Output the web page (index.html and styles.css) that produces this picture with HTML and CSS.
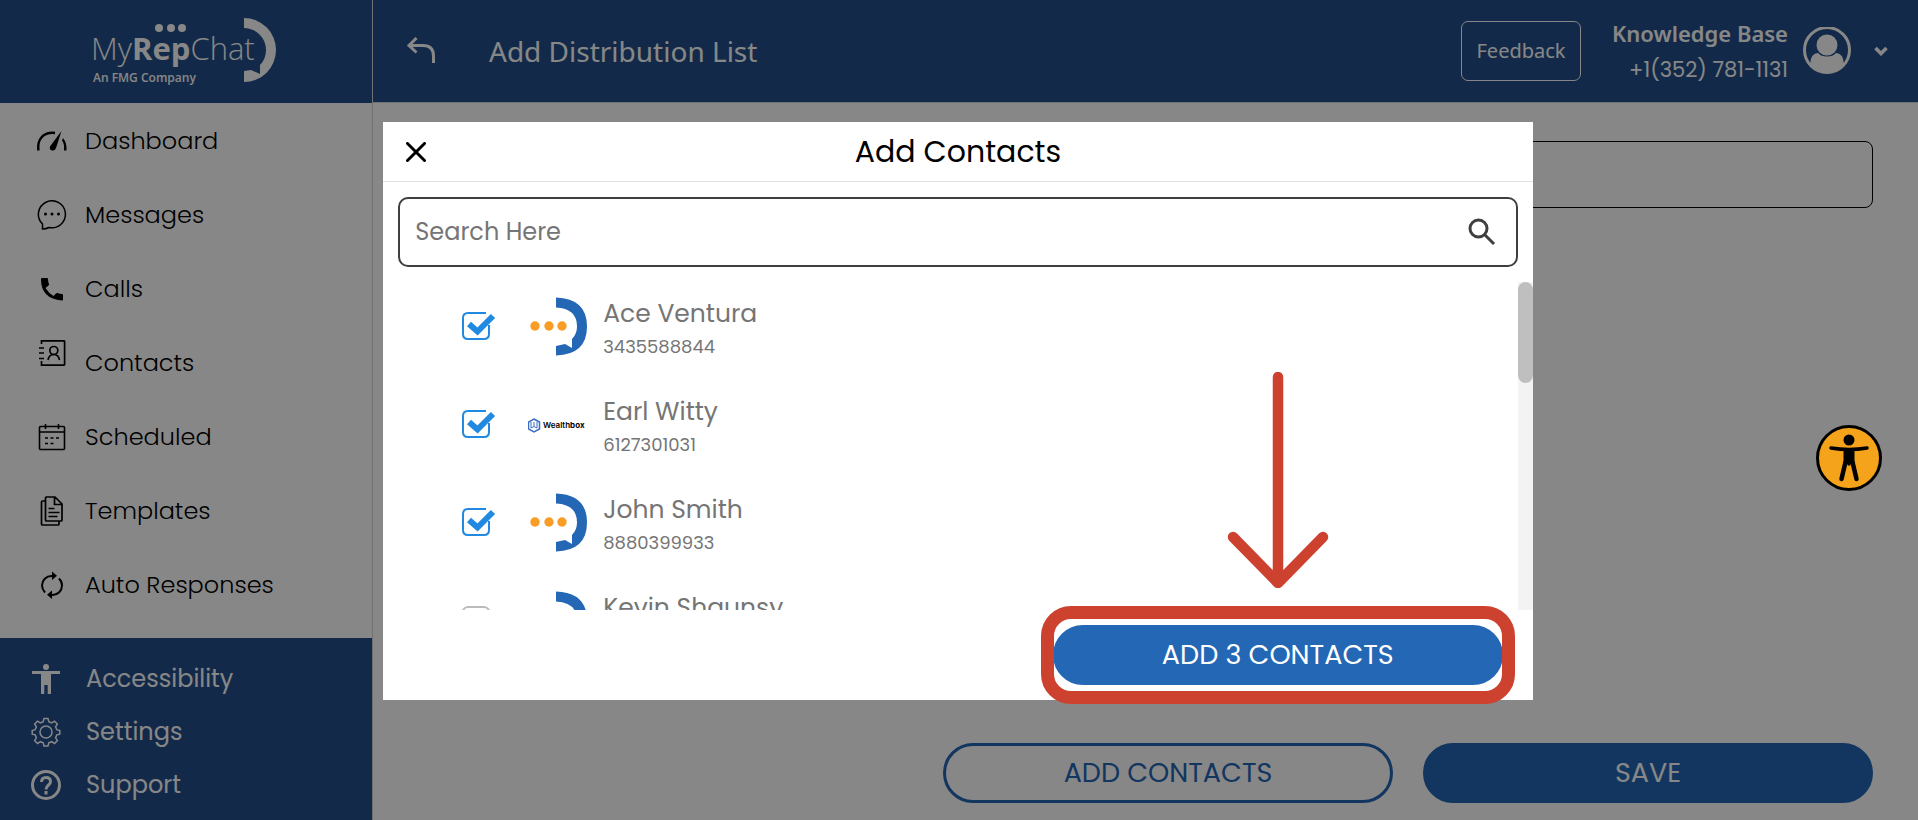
FILE: index.html
```html
<!DOCTYPE html>
<html lang="en">
<head>
	<meta charset="UTF-8">
	<title>Add Distribution List</title>
	<link rel="stylesheet" href="styles.css">
</head>
<body>
	<svg class="defs" width="0" height="0">
		<symbol id="chat-logo" viewBox="0 0 60 60">
			<path d="M28 .5q31 1 31 29T28 58.500V49l9-2 7 4v-9q5-5 5-12.500 0-18-21-19z" fill="#2467b5"/>
			<g fill="#f99d26"><circle cx="7" cy="29" r="4.700"/><circle cx="21" cy="29" r="4.700"/><circle cx="34" cy="29" r="4.700"/></g>
		</symbol>
	</svg>

	<div class="page">
		<div class="sidebar">
			<div class="logo">
				<svg width="190" height="70" viewBox="0 0 190 70" fill="#fff">
					<circle cx="68" cy="11" r="4"/><circle cx="80" cy="11" r="4"/><circle cx="91" cy="11" r="4"/>
					<path d="M153 1a32 32 0 0 1 0 64V54l7-1 9 4v-9q6-6 6-15a22 22 0 0 0-22-22z"/>
					<text class="logo-name" x="0" y="43">My<tspan class="bold">Rep</tspan>Chat</text>
					<text class="logo-sub" x="2" y="65">An FMG Company</text>
				</svg>
			</div>
			<ul class="menu">
				<li><a href="#">
					<svg width="30" height="30" viewBox="0 0 30 30"><path d="M1.500 24.500Q0 14 7 9q5-3 11-2" fill="none" stroke="#000" stroke-width="2.400"/><path d="M24.500 5 19 22q-1 3-4 2.500-3-1-2-4zM26 12q4 5 3.500 12.500h-2.500q.5-7-2-10z"/></svg>
					Dashboard</a></li>
				<li><a href="#">
					<svg width="30" height="30" viewBox="0 0 30 30"><path d="M5.500 29V24A13.500 13.500 0 1 1 12 27.500Q9 29 5.500 29z" fill="none" stroke="#000" stroke-width="1.500"/><circle cx="8.500" cy="14" r="1.500"/><circle cx="15" cy="14" r="1.500"/><circle cx="21.500" cy="14" r="1.500"/></svg>
					Messages</a></li>
				<li><a href="#">
					<svg width="30" height="30" viewBox="0 0 30 30"><path d="M4 5q0-1 1-1h5q1 0 1 1 0 3 1 5 0 1-.5 1.500L8.500 14q3 5 8 8l2.500-2.500q.6-.6 1.500-.4 2.500.9 4.500.9 1 0 1 1v4.500q0 1-1 1Q4 25 4 5z"/></svg>
					Calls</a></li>
				<li class="raised"><a href="#">
					<svg width="30" height="30" viewBox="0 0 30 30" fill="none" stroke="#000" stroke-width="1.700"><path d="M4.500 6V2.800H27q.6 0 .6.600V26.500q0 .6-.6.600H4.500V23M2 10h5M2 15h5M2 20.500h5M11 22q1-5.500 5.800-5.500T22.500 22"/><circle cx="16.800" cy="12.500" r="4"/></svg>
					Contacts</a></li>
				<li><a href="#">
					<svg width="30" height="30" viewBox="0 0 30 30" fill="none" stroke="#000" stroke-width="1.600"><rect x="2.500" y="4.500" width="25" height="23" rx="1"/><path d="M2.500 10h25M8.500 2v5M21.500 2v5"/><path d="M8 16h14M8 21.500h9" stroke-dasharray="3 2.500"/></svg>
					Scheduled</a></li>
				<li><a href="#">
					<svg width="30" height="30" viewBox="0 0 30 30" fill="none" stroke="#000" stroke-width="1.700"><path d="M9 1h9l7 7v16q0 1-1 1H9.500q-1 0-1-1V2q0-1 1-1zM17.500 1v7.500H25M8 5H5.500q-1 0-1 1v22q0 1 1 1H21q1 0 1-1v-2.500M11.500 12.500h6M11.500 16.500h11M11.500 20.500h9"/></svg>
					Templates</a></li>
				<li><a href="#">
					<svg width="30" height="30" viewBox="0 0 30 30"><path d="M8 22.500Q5 19 5 15.500A9.500 9.500 0 0 1 14.500 6H16M22 8.500q3 3 3 7A9.500 9.500 0 0 1 15.500 25H14" fill="none" stroke="#000" stroke-width="2"/><path d="M15 1.500v8.500l5-4.300zM15 29v-8.500l-5 4.300z"/></svg>
					Auto Responses</a></li>
			</ul>
			<ul class="submenu">
				<li><a href="#">
					<svg width="30" height="30" viewBox="0 0 30 30" fill="#fff"><circle cx="15" cy="3" r="3"/><path d="M1 7h28v3H20v20h-3.300v-9h-3.400v9H10V10H1z"/></svg>
					Accessibility</a></li>
				<li><a href="#">
					<svg width="30" height="30" viewBox="0 0 30 30" fill="none" stroke="#fff" stroke-width="1.500"><circle cx="15" cy="15" r="6"/><path d="M13 1.500h4l.8 3.200 2.800 1.200 2.900-1.800 2.900 2.900-1.800 2.900 1.200 2.800 3 .8v3.600l-3 .8-1.200 2.800 1.800 2.900-2.900 2.900-2.900-1.800-2.800 1.200-.8 3.100h-4l-.8-3.100-2.800-1.200-2.900 1.800-2.900-2.900 1.800-2.900-1.200-2.800-3-.8v-3.600l3-.8 1.200-2.800-1.800-2.900 2.900-2.900 2.900 1.800 2.800-1.200z"/></svg>
					Settings</a></li>
				<li><a href="#">
					<svg width="30" height="30" viewBox="0 0 30 30" fill="none" stroke="#fff" stroke-width="3"><circle cx="15" cy="15" r="13.500"/><path d="M10.500 12q0-4.500 4.500-4.500t4.500 4q0 2-2.200 3.700T15 19.500M15 21v3.500"/></svg>
					Support</a></li>
			</ul>
		</div>

		<div class="main">
			<div class="header">
				<button class="back" type="button" aria-label="Back">
					<svg width="30" height="28" viewBox="0 0 30 28" fill="none" stroke="#fff" stroke-width="3"><path d="M10.500 1 3 8.500l7.500 7M3.500 8.500H17q10.500 0 10.500 10.500v7"/></svg>
				</button>
				<h1>Add Distribution List</h1>
				<button class="feedback" type="button">Feedback</button>
				<div class="user">
					<strong>Knowledge Base</strong>
					<span>+1(352) 781-1131</span>
				</div>
				<svg class="avatar" width="48" height="48" viewBox="0 0 48 48"><circle cx="24" cy="23" r="22.500" fill="none" stroke="#fff" stroke-width="3"/><circle cx="24" cy="18" r="10.500" fill="#fff"/><path d="M7 37q1-11 8-11 3 3.500 9 3.500t9-3.500q7 0 8 11-7 9.500-17 9.500T7 37z" fill="#fff"/></svg>
				<svg width="14" height="10" viewBox="0 0 14 10"><path d="m1.500 2 5.500 5.500L12.500 2" fill="none" stroke="#fff" stroke-width="3.600"/></svg>
			</div>
			<div class="content">
				<input class="list-name" type="text" aria-label="List name">
				<div class="actions">
					<button class="btn outline" type="button">ADD CONTACTS</button>
					<button class="btn" type="button">SAVE</button>
				</div>
			</div>
		</div>
	</div>

	<div class="overlay">
		<div class="modal">
			<div class="modal-head">
				<button class="close" type="button" aria-label="Close">
					<svg width="20" height="20" viewBox="0 0 20 20"><path d="m1.500 1.500 17 17M18.500 1.500l-17 17" stroke="#000" stroke-width="3" stroke-linecap="round"/></svg>
				</button>
				<h2>Add Contacts</h2>
			</div>
			<div class="search">
				<input type="text" placeholder="Search Here" aria-label="Search Here">
				<svg width="28" height="28" viewBox="0 0 28 28" fill="none" stroke="#3f3f3f" stroke-width="3"><circle cx="10.500" cy="10.500" r="8.500"/><path d="m16.500 16.500 9.500 9.500"/></svg>
			</div>
			<div class="list-wrap">
				<ul class="contacts">
					<li>
						<input type="checkbox" id="c1" checked>
						<svg width="60" height="60"><use href="#chat-logo"/></svg>
						<label for="c1"><b>Ace Ventura</b><span>3435588844</span></label>
					</li>
					<li>
						<input type="checkbox" id="c2" checked>
						<svg width="60" height="60" viewBox="0 0 60 60"><path d="m6 24 5.500 3v7L6 37l-5.500-3v-7z" fill="none" stroke="#3a6cc0" stroke-width="1.500"/><path d="M3 27v6l3-1.500L9 33v-6M6 27v4" fill="none" stroke="#3a6cc0"/><text class="wealth" x="15" y="33">Wealth<tspan class="bold">box</tspan></text></svg>
						<label for="c2"><b>Earl Witty</b><span>6127301031</span></label>
					</li>
					<li>
						<input type="checkbox" id="c3" checked>
						<svg width="60" height="60"><use href="#chat-logo"/></svg>
						<label for="c3"><b>John Smith</b><span>8880399933</span></label>
					</li>
					<li>
						<input type="checkbox" id="c4">
						<svg width="60" height="60"><use href="#chat-logo"/></svg>
						<label for="c4"><b>Kevin Shaunsy</b></label>
					</li>
				</ul>
				<div class="track"><div class="thumb"></div></div>
			</div>
			<div class="modal-foot">
				<div class="target">
					<button class="btn" type="button">ADD 3 CONTACTS</button>
					<div class="ring"></div>
					<svg class="arrow" width="102" height="216" viewBox="0 0 102 216"><path d="M51 5v205M6 165l45 46 45-46" fill="none" stroke="#cd412f" stroke-width="10.500" stroke-linecap="round" stroke-linejoin="round"/></svg>
				</div>
			</div>
		</div>
	</div>

	<button class="widget" type="button" aria-label="Accessibility options">
		<svg width="66" height="66" viewBox="0 0 66 66"><circle cx="33" cy="33" r="31.500" fill="#f6a31c" stroke="#000" stroke-width="3"/><circle cx="33" cy="15" r="5.500"/><path d="M15 23q18 3 36 0M33 25v14" fill="none" stroke="#000" stroke-width="3.500" stroke-linecap="round"/><path d="M27.500 24h11v15H27.500z"/><path d="m29.500 37-4 17M36.500 37l4 17" stroke="#000" stroke-width="4.500" stroke-linecap="round"/></svg>
	</button>
</body>
</html>
```
FILE: styles.css
```css
/*css reset*/
html,body,ul,li,h1,h2{
	padding: 0;
	margin: 0;
}
*{box-sizing: border-box;}
body{
	background: #fff;
	font: 400 24px/36px Poppins, Inter, sans-serif;
	color: #000;
}
ul{list-style-type: none;}
a{
	color: inherit;
	text-decoration: none;
}
button,input{
	font: inherit;
	cursor: pointer;
}
button{
	padding: 0;
	border: 0;
	background: none;
}
svg{
	display: block;
	flex: none;
}
.defs{position: absolute;}
.bold{font-weight: 700;}

/*layout*/
.page{
	display: flex;
	height: 100vh;
}
.sidebar{
	width: 373px;
	flex: none;
	display: flex;
	flex-direction: column;
	border-right: 1px solid #d5d5d5;
}
.main{
	flex: 1;
	display: flex;
	flex-direction: column;
}

/*sidebar*/
.logo{
	height: 103px;
	display: flex;
	align-items: center;
	justify-content: center;
	background: #224f8a;
}
.logo-name{font: 300 31px "Open Sans", sans-serif;}
.logo-name .bold{font-weight: 700;}
.logo-sub{font: 600 12px "Open Sans", sans-serif;}
.menu{
	flex: 1;
	padding-top: 1px;
	font-weight: 300;
}
.menu a{
	height: 74px;
	display: flex;
	align-items: center;
	gap: 18px;
	padding-left: 37px;
}
.menu .raised svg{margin-bottom: 20px;}
.submenu{
	background: #224f8a;
	color: #fff;
	padding: 14px 0 9px;
}
.submenu a{
	height: 53px;
	display: flex;
	align-items: center;
	gap: 25px;
	padding-left: 31px;
}

/*header*/
.header{
	height: 103px;
	display: flex;
	align-items: center;
	background: #224f8a;
	border-bottom: 1px solid #d5d5d5;
	color: #fff;
	padding-right: 30px;
	font-family: "Segoe UI", "Noto Sans", sans-serif;
}
.back{margin: 0 53px 0 33px;}
.header h1{
	flex: 1;
	font-size: 28px;
	font-weight: 400;
}
.feedback{
	width: 120px;
	height: 60px;
	border: 1px solid #fff;
	border-radius: 7px;
	color: #fff;
	font-size: 20px;
	margin-right: 31px;
}
.user{
	display: flex;
	flex-direction: column;
	text-align: right;
}
.user strong{
	font-size: 22px;
	line-height: 38px;
	font-weight: 600;
}
.user span{
	font: 400 21px/36px Poppins, Inter, sans-serif;
}
.avatar{margin: 0 23px 0 15px;}

/*content*/
.content{
	flex: 1;
	display: flex;
	flex-direction: column;
	justify-content: space-between;
	padding: 38px 45px 17px;
}
.list-name{
	width: 100%;
	height: 67px;
	border: 1px solid #000;
	border-radius: 8px;
	padding: 0 16px;
	background: #fff;
}
.actions{
	display: flex;
	justify-content: flex-end;
	gap: 30px;
}
.btn{
	width: 450px;
	height: 60px;
	border: 3px solid #2467b5;
	border-radius: 30px;
	background: #2467b5;
	color: #fff;
	font-size: 27px;
}
.btn.outline{
	background: #fff;
	color: #2467b5;
}

/*modal*/
.overlay{
	position: fixed;
	top: 0;
	right: 0;
	bottom: 0;
	left: 0;
	display: flex;
	align-items: center;
	justify-content: center;
	padding: 2px 2px 0 0;
	background: rgba(0,0,0,.47);
}
.modal{
	width: 60%;
	background: #fff;
}
.modal-head{
	height: 60px;
	display: flex;
	align-items: center;
	padding: 0 23px;
	border-bottom: 1px solid #e2e2e2;
}
.modal-head h2{
	flex: 1;
	text-align: center;
	font-size: 30px;
	font-weight: 400;
	padding-right: 20px;
}
.search{
	height: 70px;
	display: flex;
	align-items: center;
	margin: 15px;
	padding: 0 20px 0 15px;
	border: 2px solid #3f3f3f;
	border-radius: 10px;
}
.search input{
	flex: 1;
	border: 0;
	outline: 0;
	padding: 0;
	background: none;
}
.search input::placeholder{color: #757575;}
.list-wrap{
	height: 40vh;
	display: flex;
}
.contacts{
	flex: 1;
	overflow: hidden;
}
.contacts li{
	height: 98px;
	display: flex;
	align-items: flex-start;
	padding: 15px 0 0 79px;
}
.contacts input{
	appearance: none;
	width: 34px;
	height: 30px;
	margin: 14px 32px 0 0;
	background: url("data:image/svg+xml,%3Csvg xmlns='http://www.w3.org/2000/svg' viewBox='0 0 34 30' fill='none' stroke='%23bbb' stroke-width='2'%3E%3Crect x='1' y='2' width='26' height='26' rx='5'/%3E%3C/svg%3E");
}
.contacts input:checked{
	background: url("data:image/svg+xml,%3Csvg xmlns='http://www.w3.org/2000/svg' viewBox='0 0 34 30' fill='none' stroke='%232189e0' stroke-width='2'%3E%3Cpath d='M24 2H6q-5 0-5 5v16q0 5 5 5h16q5 0 5-5v-9'/%3E%3Cpath d='m7 13 8.500 7.500L31 5' stroke-width='6'/%3E%3C/svg%3E");
}
.contacts label{
	display: flex;
	flex-direction: column;
	margin: -2px 0 0 15px;
	color: #757575;
}
.contacts b{
	font-size: 25px;
	line-height: 38px;
	font-weight: 400;
}
.contacts span{
	font-size: 18px;
	line-height: 28px;
}
.wealth{
	font: 600 8px Inter, sans-serif;
}
.track{
	width: 15px;
	background: #f3f3f3;
}
.thumb{
	height: 101px;
	border-radius: 8px;
	background: #bfbfbf;
}
.modal-foot{
	display: flex;
	justify-content: flex-end;
	padding: 15px 30px;
}

/*pointer drawn over the button*/
.target{position: relative;}
.target .btn{display: block;}
.ring{
	position: absolute;
	top: -19px;
	right: -12px;
	bottom: -19px;
	left: -12px;
	border: 13px solid #cd412f;
	border-radius: 30px;
	pointer-events: none;
}
.arrow{
	position: absolute;
	left: 50%;
	bottom: 97px;
	margin-left: -51px;
	pointer-events: none;
}

/*accessibility button*/
.widget{
	position: fixed;
	right: 36px;
	top: 425px;
}
```
